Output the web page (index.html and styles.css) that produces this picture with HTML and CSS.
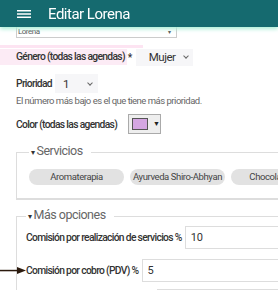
FILE: index.html
```html
<html>
	<head>
		<title>Editar Lorena</title>
		<link rel="stylesheet" href="styles.css">
	</head>
	<body>
		<div class="TopBar">
			<svg class="Menu" width="14" height="8" viewBox="0 0 14 8"><rect y="0" width="14" height="1.5" fill="#fff"/><rect y="3.25" width="14" height="1.5" fill="#fff"/><rect y="6.5" width="14" height="1.5" fill="#fff"/></svg>
			<span class="Title">Editar Lorena</span>
		</div>

		<div class="Page">
			<div class="Row">
				<div class="SmallSelect"><span>Lorena</span><span class="Caret">&#9662;</span></div>
			</div>
			<div class="Pink"></div>
			<div class="Row RowGenero">
				<label class="Label Hl">Género (todas las agendas)</label><span class="Label Star">*</span>
				<div class="Select SelGenero"><span>Mujer</span><span class="Chev"></span></div>
			</div>
			<div class="Row RowPrio">
				<label class="Label">Prioridad</label>
				<div class="Select SelPrio"><span>1</span><span class="Chev"></span></div>
			</div>
			<div class="Help">El número más bajo es el que tiene más prioridad.</div>
			<div class="Row RowColor">
				<label class="Label">Color (todas las agendas)</label>
				<div class="ColorBtn"><span class="Swatch"></span><span class="Tri">&#9660;</span></div>
			</div>

			<fieldset class="Box Servicios">
				<legend><span class="Tri2">&#9662;</span>Servicios</legend>
				<div class="Chips">
					<span class="Chip">Aromaterapia</span>
					<span class="Chip">Ayurveda Shiro-Abhyan</span>
					<span class="Chip">Chocolaterapia</span>
				</div>
			</fieldset>

			<fieldset class="Box Mas">
				<legend><span class="Tri2">&#9662;</span>Más opciones</legend>
				<div class="Field First">
					<label class="Label">Comisión por realización de servicios %</label>
					<div class="Input">10</div>
				</div>
				<div class="Field">
					<svg class="Arrow" width="26" height="7" viewBox="0 0 26 7"><rect x="0" y="2.8" width="18" height="1.5" fill="#2b1a0e"/><polygon points="17,0 26,3.5 17,7" fill="#2b1a0e"/></svg>
					<label class="Label">Comisión por cobro (PDV) %</label>
					<div class="Input">5</div>
				</div>
				<div class="Field Last">
					<div class="Input Ghost"></div>
				</div>
			</fieldset>
		</div>
	</body>
</html>
```

FILE: styles.css
```css
html, body {margin: 0; height: 100%; overflow: hidden; background-color: white;}
body { font-family: Roboto, "Noto Sans", sans-serif; color: #333; }

.TopBar {
	position: fixed;
	left: 0;
	top: 0;
	width: 100%;
	height: 27px;
	background-color: #156a6f;
	box-shadow: 0 2px 4px #a9eed6;
	display: flex;
	align-items: center;
	z-index: 2;
}
.Menu { margin-left: 17px; margin-right: 17px; margin-top: 1px; }
.Title { color: white; font-size: 15px; letter-spacing: -0.5px; }

.Page { padding-top: 26px; }

.Row { display: flex; align-items: center; padding-left: 16px; }

.SmallSelect {
	width: 152px;
	height: 10px;
	border: 1px solid #ccc;
	font-size: 8px;
	color: #555;
	display: flex;
	justify-content: space-between;
	padding: 0 6px 0 1px;
	line-height: 10px;
	letter-spacing: -0.5px;
}
.Caret { font-size: 6px; }

.Pink { height: 3px; width: 143px; background-color: #fde4f2; margin-top: 7px; }

.Label { font-size: 10.3px; font-weight: 500; color: #333; letter-spacing: -0.68px; white-space: nowrap; }

.RowGenero { height: 16px; margin-top: 1px; }
.Hl { background-color: #fcebf5; margin-left: -16px; padding-left: 16px; padding-right: 2px; line-height: 16px; }
.Star { margin-left: 1px; }

.Select {
	display: flex;
	align-items: center;
	justify-content: space-between;
	background-color: #f6f6f8;
	font-size: 11.5px;
	letter-spacing: -0.5px;
	color: #333;
	height: 17px;
}
.Chev {
	width: 3px;
	height: 3px;
	border-right: 1px solid #666;
	border-bottom: 1px solid #666;
	transform: rotate(45deg);
	margin-top: -2px;
}
.SelGenero { width: 39px; margin-left: 4px; padding: 0 5px 0 13px; }
.RowPrio { margin-top: 9px; }
.SelPrio { width: 29px; margin-left: 3px; padding: 0 6px 0 8px; height: 19px; }

.Help { font-size: 9.5px; color: #666; padding-left: 16px; margin-top: 2px; line-height: 12px; letter-spacing: -0.5px; }

.RowColor { margin-top: 7px; }
.ColorBtn {
	margin-left: 11px;
	width: 31px;
	height: 18px;
	border: 1px solid #aaa;
	background-color: #eee;
	display: flex;
	align-items: center;
}
.Swatch { width: 14px; height: 10px; border: 1px solid #555; background-color: #d4a6e2; margin-left: 3px; }
.Tri { font-size: 7px; margin-left: 5px; color: #222; }

.Box {
	margin: 0 0 0 16px;
	border: 1px solid #ddd;
	border-right: none;
}
.Box legend {
	font-size: 12.5px;
	line-height: 14px;
	color: #666;
	letter-spacing: -0.5px;
	padding: 0 8px 0 2px;
	margin-left: 0;
}
.Tri2 { font-size: 8px; color: #333; margin-right: 2px; }

.Servicios { margin-top: 10px; border-bottom: 2px solid #ddd; padding: 9px 0 13px 12px; }
.Chips { display: flex; gap: 6px; white-space: nowrap; }
.Chip {
	background-color: #e2e2e2;
	border-radius: 8px;
	font-size: 9.5px;
	letter-spacing: -0.4px;
	color: #444;
	height: 16px;
	line-height: 16px;
	width: 95px;
	text-align: center;
	flex: none;
	overflow: hidden;
}

.Mas { margin-top: 8px; padding: 2px 0 0 9px; border-bottom: none; }
.Field { display: flex; align-items: center; height: 23px; margin-top: 10px; position: relative; }
.First { margin-top: 0; }
.Field .Label { margin-right: 3px; }
.Input {
	flex: 1;
	height: 21px;
	border: 1px solid #ddd;
	border-right: none;
	font-size: 11px;
	line-height: 21px;
	padding-left: 5px;
	color: #333;
}
.Arrow { position: absolute; left: -26px; top: 8px; }
.Last { margin-top: 7px; }
.Ghost { margin-left: 131px; }
```
